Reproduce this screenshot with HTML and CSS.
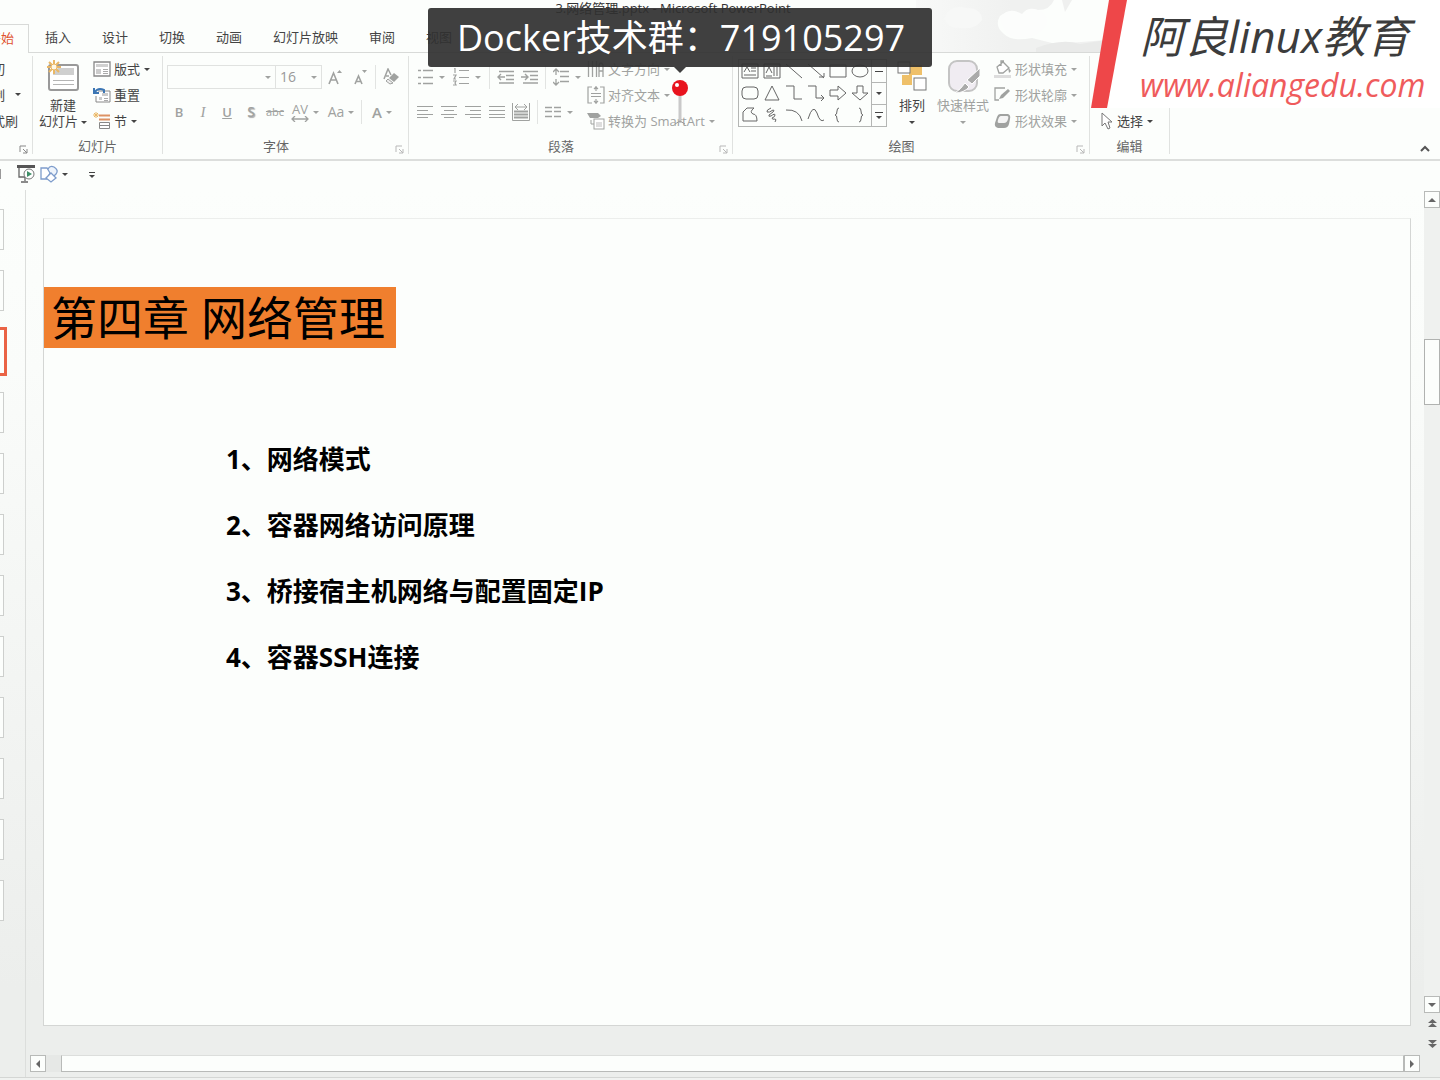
FILE: index.html
```html
<!DOCTYPE html>
<html lang="zh-CN">
<head>
<meta charset="utf-8">
<meta name="viewport" content="width=device-width, initial-scale=1">
<title>网络管理.pptx - Microsoft PowerPoint</title>
<link rel="stylesheet" href="styles.css">
</head>
<body>
<div class="app">
  <header class="titlebar">
    <svg class="clouds" width="190" height="52" viewBox="0 0 190 52" aria-hidden="true">
      <defs><linearGradient id="haze" x1="0" x2="1"><stop offset="0" stop-color="#f8f9f8"/><stop offset=".5" stop-color="#f0f1f0"/></linearGradient></defs>
      <path d="M0 0H138Q134 10 122 10Q112 8 108 16Q94 8 84 16Q78 26 88 34Q96 42 116 38L140 44L190 40V52H0Z" fill="url(#haze)"/>
      <path d="M28 18Q34 4 50 8Q66 8 66 20Q60 30 44 28Q30 28 28 18Z" fill="#f7f8f7"/>
      <path d="M84 18Q92 6 106 14Q112 6 122 10Q134 14 130 26Q122 38 104 38Q88 38 84 18Z" fill="#fcfdfc"/>
      <path d="M120 48Q146 38 164 44L190 40V52H120Z" fill="#e9eae9"/>
      <path d="M146 0H156L149 12Z" fill="#eff0ef"/>
    </svg>
    <span class="doc-title">3.网络管理.pptx - Microsoft PowerPoint</span>
  </header>

  <nav class="tabs">
    <a class="tab tab-active" href="#home"><span>开始</span></a>
    <a class="tab" href="#insert">插入</a>
    <a class="tab" href="#design">设计</a>
    <a class="tab" href="#transition">切换</a>
    <a class="tab" href="#animation">动画</a>
    <a class="tab" href="#show">幻灯片放映</a>
    <a class="tab" href="#review">审阅</a>
    <a class="tab" href="#view">视图</a>
  </nav>

  <section class="ribbon">
    <div class="group group-clipboard">
      <div class="rows">
        <button class="row-btn cut-short"><span>剪切</span></button>
        <button class="row-btn cut-short"><span>复制</span></button>
        <button class="row-btn cut-long"><span>格式刷</span></button>
      </div>
      <i class="caret clip-caret"></i>
      <div class="group-foot"><svg class="launcher" width="9" height="9" viewBox="0 0 9 9"><path d="M1 7V1H7M4 4L8 8M8 4V8H4" fill="none" stroke="currentColor"/></svg></div>
    </div>

    <div class="group group-slides">
      <div class="group-body">
        <button class="big-btn">
          <svg width="34" height="34" viewBox="0 0 34 34">
            <rect x="3" y="6" width="29" height="25" rx="2" fill="#fff" stroke="#999" stroke-width="2"/>
            <path d="M12 9H28V16H7V13Z" fill="#cfcfcf"/><path d="M7 21.500H28M7 25.500H28" stroke="#b5b5b5"/>
            <path d="M8 1V15M1 8H15M3 3L13 13M13 3L3 13" stroke="#eab765" stroke-width="2"/><circle cx="8" cy="8" r="3" fill="#fff8e4" stroke="#eab765"/>
          </svg>
          <span>新建</span><span>幻灯片<i class="caret"></i></span>
        </button>
        <div class="rows">
          <button class="row-btn"><svg width="18" height="16" viewBox="0 0 18 16"><path d="M1 1H17V15H1Z" fill="#fff" stroke="#888" stroke-width="1.300"/><path d="M3 3H15V6H3Z" fill="#d0d0d0"/><path d="M3 8H8V13H3Z" fill="#ccc"/><path d="M10 8.500H15M10 10.500H15M10 12.500H15" stroke="#aaa"/></svg><span>版式</span><i class="caret"></i></button>
          <button class="row-btn"><svg width="18" height="16" viewBox="0 0 18 16"><path d="M5 4H17V15H3V9" fill="#fff" stroke="#888"/><path d="M9 6H15V9H9ZM6 10H9V13H6Z" fill="#ccc"/><path d="M11 11.500H15M11 13.500H15" stroke="#aaa"/><path d="M1 1V6H6M1.500 5.500Q5 0 11 3V6" fill="none" stroke="#3c76b4" stroke-width="2"/></svg><span>重置</span></button>
          <button class="row-btn"><svg width="18" height="18" viewBox="0 0 18 18"><path d="M6 3.500H17M6 7.500H17" stroke="#dd9264" stroke-width="2"/><path d="M6.500 10.500H16.500V16.500H6.500ZM6 13.500H16" fill="#fff" stroke="#888"/><path d="M3 0V6M0 3H6M1 1L5 5M5 1L1 5" stroke="#eab765"/></svg><span>节</span><i class="caret"></i></button>
        </div>
      </div>
      <div class="group-foot"><span>幻灯片</span></div>
    </div>

    <div class="group group-font dim">
      <div class="tool-rows">
        <div class="tool-row">
          <div class="combo combo-font"><select aria-label="字体"><option></option></select><i class="caret"></i></div>
          <div class="combo combo-size"><select aria-label="字号"><option>16</option></select><i class="caret"></i></div>
          <button class="ico w26" aria-label="增大字号"><svg width="16" height="16" viewBox="0 0 16 16"><path d="M2 15L6.500 4L11 15M4 11H9" fill="none" stroke="currentColor" stroke-width="1.600"/><path d="M10 4L12.500 1L15 4Z" fill="currentColor"/></svg></button>
          <button class="ico w26" aria-label="减小字号"><svg width="16" height="16" viewBox="0 0 16 16"><path d="M2 15L5.500 7L9 15M3 12.500H8" fill="none" stroke="currentColor" stroke-width="1.600"/><path d="M9 1H14L11.500 4Z" fill="currentColor"/></svg></button>
          <i class="sep"></i>
          <button class="ico w26" aria-label="清除格式"><svg width="18" height="18" viewBox="0 0 18 18"><path d="M2 11L6 1L9 7M4 8H7" fill="none" stroke="currentColor" stroke-width="1.500"/><path d="M7 10L12 5L17 9L12 14Z" fill="currentColor"/><path d="M6 11L11 15L8 16L4 13Z" fill="#eee" stroke="currentColor"/></svg></button>
        </div>
        <div class="tool-row row-style">
          <button class="ico w24 bold">B</button>
          <button class="ico w24 ital">I</button>
          <button class="ico w24 under">U</button>
          <button class="ico w24 shade">S</button>
          <button class="ico w24 strike">abc</button>
          <button class="ico w36" aria-label="字符间距"><span class="kern">AV<svg width="18" height="6" viewBox="0 0 18 6"><path d="M1 3H17M4 0L1 3L4 6M14 0L17 3L14 6" fill="none" stroke="currentColor" stroke-width="1.300"/></svg></span><i class="caret"></i></button>
          <button class="ico w36 case">Aa<i class="caret"></i></button>
          <i class="sep"></i>
          <button class="ico w36 color">A<i class="caret"></i></button>
        </div>
      </div>
      <div class="group-foot foot-left"><span>字体</span><svg class="launcher" width="9" height="9" viewBox="0 0 9 9"><path d="M1 7V1H7M4 4L8 8M8 4V8H4" fill="none" stroke="currentColor"/></svg></div>
    </div>

    <div class="group group-para dim">
      <div class="group-body">
        <div class="tool-rows">
          <div class="tool-row">
            <button class="ico w36" aria-label="项目符号"><svg width="16" height="18" viewBox="0 0 16 18"><path d="M6 2.500H16M6 9.500H16M6 15.500H16M1 2.500H4M1 9.500H4M1 15.500H4" stroke="currentColor" stroke-width="1.600"/></svg><i class="caret"></i></button>
            <button class="ico w36" aria-label="编号"><svg width="16" height="18" viewBox="0 0 16 18"><path d="M6 2.500H16M6 9.500H16M6 15.500H16M1 0H2V5M0 7H3L1 11H3M0 13H3L2 15L3 17H0" fill="none" stroke="currentColor" stroke-width="1.200"/></svg><i class="caret"></i></button>
            <i class="sep"></i>
            <button class="ico w24" aria-label="减少缩进"><svg width="17" height="14" viewBox="0 0 17 14"><path d="M2 1.500H17M9 5.500H17M9 9.500H17M2 13H17M8 7H1M4 4L1 7L4 10" fill="none" stroke="currentColor" stroke-width="1.400"/></svg></button>
            <button class="ico w24" aria-label="增加缩进"><svg width="17" height="14" viewBox="0 0 17 14"><path d="M2 1.500H17M9 5.500H17M9 9.500H17M2 13H17M0 7H7M4 4L7 7L4 10" fill="none" stroke="currentColor" stroke-width="1.400"/></svg></button>
            <i class="sep"></i>
            <button class="ico w36" aria-label="行距"><svg width="16" height="18" viewBox="0 0 16 18"><path d="M7 3.500H16M7 8.500H16M7 13.500H16M3 1V7M0 4L3 1L6 4M3 11V17M0 14L3 17L6 14" fill="none" stroke="currentColor" stroke-width="1.300"/></svg><i class="caret"></i></button>
          </div>
          <div class="tool-row">
            <button class="ico w24" aria-label="左对齐"><svg width="16" height="12" viewBox="0 0 16 12"><path d="M0 .500H16M0 4.500H11M0 8.500H16M0 11.500H11" stroke="currentColor"/></svg></button>
            <button class="ico w24" aria-label="居中"><svg width="16" height="12" viewBox="0 0 16 12"><path d="M0 .500H16M3 4.500H13M0 8.500H16M3 11.500H13" stroke="currentColor"/></svg></button>
            <button class="ico w24" aria-label="右对齐"><svg width="16" height="12" viewBox="0 0 16 12"><path d="M0 .500H16M5 4.500H16M0 8.500H16M5 11.500H16" stroke="currentColor"/></svg></button>
            <button class="ico w24" aria-label="两端对齐"><svg width="16" height="12" viewBox="0 0 16 12"><path d="M0 .500H16M0 4.500H16M0 8.500H16M0 11.500H16" stroke="currentColor"/></svg></button>
            <button class="ico w24" aria-label="分散对齐"><svg width="18" height="18" viewBox="0 0 18 18"><path d="M.500 0V17.500H17.500V0M3 4H15M6 1L3 4L6 7M12 1L15 4L12 7" fill="none" stroke="currentColor"/><path d="M2 8.500H16M2 11.500H16M2 14.500H16" stroke="currentColor" stroke-width="2"/></svg></button>
            <i class="sep sep-tight"></i>
            <button class="ico w36" aria-label="分栏"><svg width="16" height="12" viewBox="0 0 16 12"><path d="M0 1.500H7M9 1.500H16M0 5.500H7M9 5.500H16M0 10.500H7M9 10.500H16" stroke="currentColor" stroke-width="1.500"/></svg><i class="caret"></i></button>
          </div>
        </div>
        <div class="rows">
          <button class="row-btn"><svg width="18" height="16" viewBox="0 0 18 16"><path d="M1.500 0V16M5.500 0V16M9.500 0V16M12 16V4Q14 0 16 4V16M12 10H16" fill="none" stroke="currentColor" stroke-width="1.300"/></svg><span>文字方向</span><i class="caret"></i></button>
          <button class="row-btn"><svg width="18" height="18" viewBox="0 0 18 18"><path d="M5 1H1V17H5M13 1H17V17H13M4 7.500H14M4 10.500H14M9 0V5M7 3L9 1L11 3M9 18V13M7 15L9 17L11 15" fill="none" stroke="currentColor" stroke-width="1.200"/></svg><span>对齐文本</span><i class="caret"></i></button>
          <button class="row-btn"><svg width="18" height="18" viewBox="0 0 18 18"><path d="M0 1H11L14 4L11 6H3Z" fill="currentColor"/><path d="M4 8V12H7" fill="none" stroke="currentColor"/><rect x="7" y="7" width="10" height="10" fill="#fff" stroke="currentColor"/><path d="M9 10H15V15H9Z" fill="#ddd"/></svg><span>转换为 SmartArt</span><i class="caret"></i></button>
        </div>
      </div>
      <div class="group-foot foot-left"><span>段落</span><svg class="launcher" width="9" height="9" viewBox="0 0 9 9"><path d="M1 7V1H7M4 4L8 8M8 4V8H4" fill="none" stroke="currentColor"/></svg></div>
    </div>

    <div class="group group-draw">
      <div class="group-body">
        <div class="gallery">
          <div class="shapes">
            <svg width="18" height="16" viewBox="0 0 18 16"><path d="M1 1H17V15H1ZM10 5H15M10 8H15M3 12H15M3 9L6 4L9 9"/></svg>
            <svg width="18" height="16" viewBox="0 0 18 16"><path d="M1 1H17V15H1ZM11 4V13M14 4V13M3 10L6 4L9 10M3 13H9"/></svg>
            <svg width="18" height="16" viewBox="0 0 18 16"><path d="M1 1L17 15"/></svg>
            <svg width="18" height="16" viewBox="0 0 18 16"><path d="M1 1L17 15M12 14H17V10"/></svg>
            <svg width="18" height="16" viewBox="0 0 18 16"><path d="M1 2H17V14H1Z"/></svg>
            <svg width="18" height="16" viewBox="0 0 18 16"><ellipse cx="9" cy="8" rx="8" ry="6"/></svg>
            <svg width="18" height="16" viewBox="0 0 18 16"><rect x="1" y="2" width="16" height="12" rx="4"/></svg>
            <svg width="18" height="16" viewBox="0 0 18 16"><path d="M9 1L16 15H2Z"/></svg>
            <svg width="18" height="16" viewBox="0 0 18 16"><path d="M1 1H9V14H17"/></svg>
            <svg width="18" height="16" viewBox="0 0 18 16"><path d="M1 1H9V13H17M14 10L17 13L14 16"/></svg>
            <svg width="18" height="16" viewBox="0 0 18 16"><path d="M1 5H9V1L17 8L9 15V11H1Z"/></svg>
            <svg width="18" height="16" viewBox="0 0 18 16"><path d="M6 1H12V8H17L9 15L1 8H6Z"/></svg>
            <svg width="18" height="16" viewBox="0 0 18 16"><path d="M2 14V5L6 1H13Q8 5 12 7Q16 7 16 14Z"/></svg>
            <svg width="18" height="16" viewBox="0 0 18 16"><path d="M8 1Q3 3 4 5Q6 6 10 3Q12 3 10 5L6 8Q5 10 8 9Q12 6 12 8Q12 10 9 11Q9 13 12 12Q14 12 12 15"/></svg>
            <svg width="18" height="16" viewBox="0 0 18 16"><path d="M1 3Q14 2 17 14"/></svg>
            <svg width="18" height="16" viewBox="0 0 18 16"><path d="M1 12Q6 -4 10 6Q13 16 17 13"/></svg>
            <svg width="18" height="16" viewBox="0 0 18 16"><path d="M10 1Q8 1 8 4Q8 8 6 8Q8 8 8 12Q8 15 10 15"/></svg>
            <svg width="18" height="16" viewBox="0 0 18 16"><path d="M8 1Q10 1 10 4Q10 8 12 8Q10 8 10 12Q10 15 8 15"/></svg>
          </div>
          <div class="gallery-nav">
            <button aria-label="上一行"><i class="dash"></i></button>
            <button aria-label="下一行"><i class="caret"></i></button>
            <button aria-label="更多"><i class="dash"></i><i class="caret"></i></button>
          </div>
        </div>
        <button class="big-btn arrange">
          <svg width="34" height="34" viewBox="0 0 34 34"><path d="M14 6H27V16H14ZM7 16H17V26H7Z" fill="#efc069"/><rect x="3" y="3" width="12" height="11" fill="#fff" stroke="#777"/><rect x="19" y="19" width="12" height="12" fill="#fff" stroke="#777"/></svg>
          <span>排列</span><span><i class="caret"></i></span>
        </button>
        <button class="big-btn quick dim">
          <svg width="34" height="34" viewBox="0 0 34 34"><rect x="3" y="2" width="28" height="30" rx="8" fill="#f0ecf2" stroke="#c4c4c4" stroke-width="2"/><path d="M34 9V17L26 25L21 21ZM19 24L23 28Q18 34 9 34Q15 30 19 24Z" fill="#aaa" stroke="#fff"/></svg>
          <span>快速样式</span><span><i class="caret"></i></span>
        </button>
        <div class="rows dim">
          <button class="row-btn"><svg width="18" height="18" viewBox="0 0 18 18"><path d="M3 7L9 2L15 8L9 13H5ZM7 6V1H10" fill="#fff" stroke="currentColor" stroke-width="1.300"/><path d="M14 7L17 11L15 13Z" fill="currentColor"/><path d="M0 15H17V18H0Z" fill="#ddd"/></svg><span>形状填充</span><i class="caret"></i></button>
          <button class="row-btn"><svg width="18" height="18" viewBox="0 0 18 18"><path d="M11 2H1V14H5" fill="none" stroke="currentColor" stroke-width="1.300"/><path d="M5 13L7 9L14 3L16 5L9 12Z" fill="currentColor"/></svg><span>形状轮廓</span><i class="caret"></i></button>
          <button class="row-btn"><svg width="18" height="16" viewBox="0 0 18 16"><path d="M6 1H14Q17 2 16 6L15 11Q14 15 10 15H4Q0 14 1 10L3 4Q4 1 6 1Z" fill="currentColor"/><path d="M7 3H13Q15 3 14 6Q13 10 10 10H5Q3 10 4 7Q5 3 7 3Z" fill="#f4f4f4"/></svg><span>形状效果</span><i class="caret"></i></button>
        </div>
      </div>
      <div class="group-foot foot-left"><span>绘图</span><svg class="launcher dim" width="9" height="9" viewBox="0 0 9 9"><path d="M1 7V1H7M4 4L8 8M8 4V8H4" fill="none" stroke="currentColor"/></svg></div>
    </div>

    <div class="group group-edit">
      <div class="rows rows-end">
        <button class="row-btn"><svg width="14" height="18" viewBox="0 0 14 18"><path d="M2 1V14L5 11L8 17L10 16L8 10H12Z" fill="#fff" stroke="#777"/></svg><span>选择</span><i class="caret"></i></button>
      </div>
      <div class="group-foot"><span>编辑</span></div>
    </div>

    <button class="collapse" aria-label="折叠功能区"><svg width="10" height="8" viewBox="0 0 10 8"><path d="M1 6L5 2L9 6" fill="none" stroke="#555" stroke-width="2"/></svg></button>
  </section>

  <div class="qat">
    <i class="qat-cut"></i>
    <button aria-label="从头开始放映"><svg width="18" height="18" viewBox="0 0 18 18"><path d="M0 1.500H18" stroke="#555" stroke-width="3"/><path d="M2 3V12H8M8 12V16M4 17H11" fill="none" stroke="#666" stroke-width="1.300"/><circle cx="12" cy="9" r="5" fill="#fff" stroke="#777"/><path d="M10 6L15 9L10 12Z" fill="#3f8f67"/></svg></button>
    <button aria-label="形状"><svg width="18" height="18" viewBox="0 0 18 18"><path d="M8 4Q10 0 14 2Q19 5 16 9L14 11" fill="#eef4fb" stroke="#7d9ccb" stroke-width="1.300"/><path d="M1 3H7L10 8L7 14H1Z" fill="#fff" stroke="#7d9ccb" stroke-width="1.300"/><path d="M11 8L16 13L11 17L6 13Z" fill="#fff" stroke="#7d9ccb" stroke-width="1.300"/></svg><i class="caret"></i></button>
    <button class="qat-more" aria-label="自定义快速访问工具栏"><i class="dash"></i><i class="caret"></i></button>
  </div>

  <main class="work">
    <aside class="thumbs">
      <i class="thumb"></i><i class="thumb"></i><i class="thumb thumb-on"></i><i class="thumb"></i><i class="thumb"></i><i class="thumb"></i>
      <i class="thumb"></i><i class="thumb"></i><i class="thumb"></i><i class="thumb"></i><i class="thumb"></i><i class="thumb"></i>
    </aside>
    <div class="editor">
      <article class="slide">
        <h1>第四章 网络管理</h1>
        <ul class="points">
          <li>1、网络模式</li>
          <li>2、容器网络访问原理</li>
          <li>3、桥接宿主机网络与配置固定IP</li>
          <li>4、容器SSH连接</li>
        </ul>
      </article>
      <div class="hbar">
        <button class="bar-btn" aria-label="向左"><i class="tri tri-left"></i></button>
        <i class="hthumb"></i>
        <button class="bar-btn" aria-label="向右"><i class="tri tri-right"></i></button>
      </div>
    </div>
    <div class="vbar">
      <button class="bar-btn" aria-label="向上"><i class="tri tri-up"></i></button>
      <div class="vtrack"><i class="vthumb"></i></div>
      <button class="bar-btn" aria-label="向下"><i class="tri tri-down"></i></button>
      <button class="page-btn" aria-label="上一张"><svg width="9" height="9" viewBox="0 0 9 9"><path d="M4.500 0L9 4H0ZM4.500 4L9 8H0Z" fill="#666"/></svg></button>
      <button class="page-btn" aria-label="下一张"><svg width="9" height="9" viewBox="0 0 9 9"><path d="M0 1H9L4.500 5ZM0 5H9L4.500 9Z" fill="#666"/></svg></button>
    </div>
  </main>
  <footer class="status"></footer>

  <div class="banner">
    <span>Docker技术群：719105297</span>
    <svg class="pin" width="18" height="60" viewBox="0 0 18 60" aria-hidden="true"><path d="M3 0H15L9 6Z" fill="#3f3f3f"/><path d="M9 28V56" stroke="#c9c9c9" stroke-width="3"/><path d="M4 57L9 54L14 57" fill="none" stroke="#999"/><circle cx="9" cy="21" r="8" fill="#e8141e"/><circle cx="6" cy="18" r="2" fill="#fff"/></svg>
  </div>

  <div class="brand">
    <svg class="brand-bar" width="38" height="108" viewBox="0 0 38 108" aria-hidden="true"><path d="M36 0H38V108H16Z" fill="#fff"/><path d="M19 0H37L17 108H1Z" fill="#ee4749"/></svg>
    <div class="brand-text">
      <strong>阿良linux教育</strong>
      <a href="#site">www.aliangedu.com</a>
    </div>
  </div>
</div>
</body>
</html>
```
FILE: styles.css
```css
* { box-sizing: border-box; }
body {
  margin: 0;
  font: 13px/16px "Open Sans", "Noto Sans CJK SC", sans-serif;
  color: #444;
  background: #fcfefc;
}
button {
  margin: 0;
  padding: 0;
  border: 0;
  background: none;
  font: inherit;
  color: inherit;
}
svg { flex: none; display: block; }
a { text-decoration: none; color: inherit; }

.app {
  position: relative;
  display: flex;
  flex-direction: column;
  min-height: 100vh;
  overflow: hidden;
}

/* title bar and tabs */
.titlebar {
  position: relative;
  display: flex;
  justify-content: center;
  height: 24px;
  padding-right: 94px;
}
.clouds { position: absolute; top: 0; right: 334px; }
.doc-title { color: #333; }
.tabs {
  position: relative;
  display: flex;
  height: 28px;
  gap: 31px;
  line-height: 26px;
}
.tab-active {
  display: flex;
  justify-content: flex-end;
  width: 29px;
  height: 29px;
  margin-right: -15px;
  padding-right: 14px;
  overflow: hidden;
  border: 1px solid #d8dad8;
  border-width: 1px 1px 0 0;
  background: #fcfefc;
  color: #e0522f;
  z-index: 1;
}
.tab-active span { flex: none; }

/* ribbon */
.ribbon {
  position: relative;
  display: flex;
  height: 109px;
  border-top: 1px solid #d8dad8;
  border-bottom: 2px solid #dcdedc;
  padding: 3px 0 5px;
  background: #fcfefc;
}
.group {
  display: flex;
  flex-direction: column;
  flex: none;
  border-right: 1px solid #e0e2e0;
}
.group-clipboard { width: 33px; position: relative; }
.group-slides { width: 130px; }
.group-font { width: 246px; }
.group-para { width: 324px; }
.group-draw { width: 357px; }
.group-edit { width: 80px; }
.group-body { display: flex; }
.group-foot {
  display: grid;
  grid-template-columns: 1fr auto 1fr;
  margin-top: auto;
  height: 16px;
  line-height: 16px;
  color: #666;
}
.foot-left { grid-template-columns: 1fr auto 1fr 19px; }
.group-foot span { grid-column: 2; }
.launcher { grid-column: -2; justify-self: end; align-self: end; margin-right: 4px; color: #888; }
.dim { color: #a0a2a0; }
.dim .launcher, .launcher.dim { color: #b8b8b8; }

.caret {
  flex: none;
  display: inline-block;
  border: 3px solid transparent;
  border-top: 3px solid currentColor;
  border-bottom: 0;
}
.dash { display: block; width: 8px; height: 1px; background: currentColor; }

.rows { display: flex; flex-direction: column; align-items: flex-start; }
.rows-end { margin-top: 52px; padding-left: 10px; }
.row-btn {
  display: flex;
  align-items: center;
  gap: 3px;
  height: 26px;
  white-space: nowrap;
}
.row-btn .caret { margin-left: 1px; }
.group-para .rows { padding-left: 2px; }
.cut-short, .cut-long { justify-content: flex-end; overflow: hidden; }
.cut-short { width: 5px; }
.cut-long { width: 18px; }
.cut-short span, .cut-long span { flex: none; }
.clip-caret { position: absolute; left: 15px; top: 37px; }

.big-btn {
  display: flex;
  flex-direction: column;
  align-items: center;
  width: 60px;
  padding-top: 3px;
  white-space: nowrap;
}
.big-btn svg { margin-bottom: 4px; }
.big-btn .caret { margin: 0 0 2px 3px; }

.tool-rows { display: flex; flex-direction: column; gap: 11px; padding: 9px 0 0 4px; }
.tool-row { display: flex; align-items: center; height: 24px; }
.ico { display: flex; align-items: center; justify-content: center; gap: 6px; height: 24px; }
.w24 { width: 24px; }
.w26 { width: 26px; }
.w36 { width: 36px; }
.group-font .w36 { gap: 4px; }
.sep { width: 1px; height: 24px; margin: 0 4px 0 5px; background: #e2e4e2; }
.group-para .sep { margin: 0 3px 0 4px; }
.combo {
  display: flex;
  align-items: center;
  height: 24px;
  padding-right: 4px;
  border: 1px solid #e0e2e0;
}
.combo-font { width: 109px; }
.combo-size { width: 46px; border-left: 0; }
.combo select {
  flex: 1;
  min-width: 0;
  appearance: none;
  border: 0;
  padding: 0 0 0 4px;
  background: none;
  font: 14px/20px "Open Sans", sans-serif;
  color: #999;
}
.group-font .sep { margin: 0 2px 0 1px; }
.group-font .row-style .sep { margin: 0 2px; }
.row-style { font-weight: 600; }
.ital { font-style: italic; font-family: "Liberation Serif", serif; font-size: 15px; font-weight: 400; }
.under { text-decoration: underline; }
.shade { text-shadow: 1px 1px 1px #aaa; font-size: 14px; }
.strike { text-decoration: line-through; font-size: 11px; font-weight: 400; }
.kern { display: flex; flex-direction: column; align-items: center; font-weight: 400; line-height: 13px; }
.case { font-size: 14px; font-weight: 400; }
.color { font-size: 15px; }

/* shape gallery */
.gallery {
  display: flex;
  height: 68px;
  margin: 3px 0 0 5px;
  border: 1px solid #b4b6b4;
}
.shapes {
  display: grid;
  grid-template-columns: repeat(6, 22px);
  grid-template-rows: repeat(3, 22px);
  place-items: center;
}
.shapes svg { fill: none; stroke: #666; }
.gallery-nav {
  display: grid;
  grid-template-rows: 1fr 1fr 1fr;
  width: 15px;
  border-left: 1px solid #b4b6b4;
}
.gallery-nav button {
  display: flex;
  flex-direction: column;
  align-items: center;
  justify-content: center;
  gap: 3px;
}
.gallery-nav button + button { border-top: 1px solid #b4b6b4; }
.arrange { width: 50px; }
.quick { width: 52px; margin-right: 5px; }
.arrange .caret, .quick .caret { margin-left: 0; }

.collapse { margin: auto 10px 1px auto; }

/* quick access toolbar */
.qat { display: flex; align-items: center; height: 29px; padding-bottom: 3px; }
.qat button { display: flex; align-items: center; gap: 4px; margin-right: 5px; }
.qat-cut { width: 1px; height: 10px; margin-right: 16px; background: #999; }
.qat .qat-more { flex-direction: column; gap: 2px; margin-left: 16px; padding-top: 2px; }
.qat-more .dash { width: 6px; }

/* slide workspace */
.work {
  display: flex;
  flex: 1;
  background: linear-gradient(#fcfefc 0, #fafcfa 20%, #eceeec 90%);
}
.thumbs {
  display: flex;
  flex-direction: column;
  gap: 20px;
  width: 26px;
  padding-top: 19px;
  border-right: 1px solid #dcdedc;
}
.thumb {
  flex: none;
  width: 4px;
  height: 41px;
  border: 1px solid #cdcfcd;
  border-left: 0;
  background: #fcfefc;
}
.thumb-on { width: 7px; height: 49px; margin: -4px 0; border: 3px solid #ea6345; border-left: 0; }
.editor { display: flex; flex-direction: column; flex: 1; min-width: 0; }
.slide {
  flex: 1;
  margin: 28px 13px 29px 17px;
  border: 1px solid #d4d6d4;
  border-top-color: #eceeec;
  background: #fcfefc;
  color: #000;
}
.slide h1 {
  width: fit-content;
  margin: 68px 0 0;
  padding: 0 11px 0 7px;
  background: #f07f2e;
  font-size: 46px;
  font-weight: 400;
  line-height: 61px;
}
.points {
  margin: 78px 0 0 182px;
  padding: 0;
  list-style: none;
  font-size: 26px;
  font-weight: 700;
  line-height: 66px;
}
.bar-btn {
  display: grid;
  place-items: center;
  width: 16px;
  height: 17px;
  border: 1px solid #b8bab8;
  background: #fcfefc;
}
.hbar { display: flex; margin: 0 4px 5px 4px; background: #e6e8e6; }
.hthumb { flex: 1; margin-left: 15px; border: 1px solid #b8bab8; border-top-color: #dcdedc; background: #fcfefc; }
.vbar { display: flex; flex-direction: column; width: 16px; padding: 1px 0 24px; }
.vtrack { flex: 1; background: #eff1ef; }
.vthumb { display: block; height: 66px; margin-top: 131px; border: 1px solid #b0b2b0; background: #fcfefc; }
.page-btn { display: grid; place-items: center; height: 20px; }
.tri { border: 4px solid transparent; }
.tri-up { border-bottom-color: #666; border-top: 0; }
.tri-down { border-top-color: #666; border-bottom: 0; }
.tri-left { border-right-color: #666; border-left: 0; }
.tri-right { border-left-color: #666; border-right: 0; }
.status { height: 3px; border-top: 1px solid #d4d6d4; background: #f0f2f0; }

/* floating promo banner */
.banner {
  position: absolute;
  left: 428px;
  top: 8px;
  height: 59px;
  padding: 0 27px 0 29px;
  border-radius: 3px;
  background: rgba(48, 48, 48, 0.92);
  color: #fff;
  font-size: 36px;
  line-height: 59px;
  white-space: nowrap;
}
.pin { position: absolute; left: 50%; top: 59px; margin-left: -9px; }

/* corner logo */
.brand { position: absolute; top: 0; right: 0; display: flex; height: 108px; }
.brand-text {
  display: flex;
  flex-direction: column;
  width: 312px;
  padding: 10px 0 0 12px;
  background: #fff;
  font-style: italic;
  white-space: nowrap;
}
.brand-text strong { font-size: 44px; font-weight: 400; line-height: 52px; color: #3c3c3c; }
.brand-text a { font-size: 32px; line-height: 46px; color: #ef5b5c; }
```
